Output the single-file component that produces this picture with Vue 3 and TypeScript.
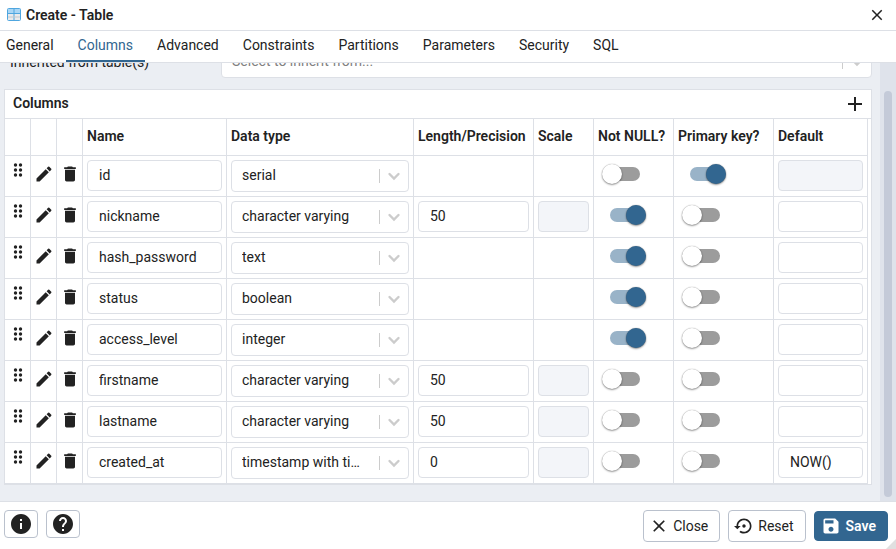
<script setup lang="ts">
import { computed, onMounted, ref } from 'vue'

interface Column {
  name: string
  type: string
  length: string | null
  scale: boolean
  notNull: boolean
  primary: boolean
  default: string
  lockDefault?: boolean
}

const tabs = ['General', 'Columns', 'Advanced', 'Constraints', 'Partitions', 'Parameters', 'Security', 'SQL']
const active = ref('Columns')

const types = ['serial', 'character varying', 'text', 'boolean', 'integer', 'timestamp with time zone']

const columns = ref<Column[]>([
  { name: 'id', type: 'serial', length: null, scale: false, notNull: false, primary: true, default: '', lockDefault: true },
  { name: 'nickname', type: 'character varying', length: '50', scale: true, notNull: true, primary: false, default: '' },
  { name: 'hash_password', type: 'text', length: null, scale: false, notNull: true, primary: false, default: '' },
  { name: 'status', type: 'boolean', length: null, scale: false, notNull: true, primary: false, default: '' },
  { name: 'access_level', type: 'integer', length: null, scale: false, notNull: true, primary: false, default: '' },
  { name: 'firstname', type: 'character varying', length: '50', scale: true, notNull: false, primary: false, default: '' },
  { name: 'lastname', type: 'character varying', length: '50', scale: true, notNull: false, primary: false, default: '' },
  { name: 'created_at', type: 'timestamp with time zone', length: '0', scale: true, notNull: false, primary: false, default: 'NOW()' },
])

function addColumn() {
  columns.value.push({ name: '', type: 'text', length: null, scale: false, notNull: false, primary: false, default: '' })
}

function removeColumn(index: number) {
  columns.value.splice(index, 1)
}

const scroller = ref<HTMLElement | null>(null)
const view = ref({ top: 0, height: 1, total: 1 })

function measure() {
  const el = scroller.value
  if (el) view.value = { top: el.scrollTop, height: el.clientHeight, total: el.scrollHeight }
}

const thumb = computed(() => ({
  marginTop: `${(view.value.top / view.value.total) * view.value.height}px`,
  height: `${(view.value.height / view.value.total) * 100}%`,
}))

onMounted(() => {
  if (scroller.value) scroller.value.scrollTop = scroller.value.scrollHeight
  measure()
})
</script>

<template>
  <div class="dialog">
    <header class="titlebar">
      <svg class="table-icon" viewBox="0 0 14 13" aria-hidden="true">
        <rect x="0.5" y="0.5" width="13" height="12" rx="1" fill="#e9eaec" stroke="#4fa6df" />
        <rect x="1" y="1" width="12" height="4" fill="#a9d6f5" />
        <path d="M1 5.5H13M7 1V12" stroke="#4fa6df" />
        <path d="M1 9H13" stroke="#c3c8cc" />
      </svg>
      <h1>Create - Table</h1>
      <button class="bare" type="button" aria-label="Close dialog">
        <svg class="i18" viewBox="0 0 24 24"><path d="M19 6.41 17.59 5 12 10.59 6.41 5 5 6.41 10.59 12 5 17.59 6.41 19 12 13.41 17.59 19 19 17.59 13.41 12z" /></svg>
      </button>
    </header>

    <nav class="tabs" role="tablist">
      <button
        v-for="tab in tabs"
        :key="tab"
        type="button"
        role="tab"
        class="tab"
        :class="{ active: tab === active }"
        :aria-selected="tab === active"
        @click="active = tab"
      >{{ tab }}</button>
    </nav>

    <main class="body">
      <div ref="scroller" class="scroller" @scroll="measure">
        <div class="inherit">
          <label for="inherit">Inherited from table(s)</label>
          <div class="picker">
            <select id="inherit" class="placeholder">
              <option>Select to inherit from...</option>
            </select>
            <svg class="arrow" viewBox="0 0 32 20" aria-hidden="true"><path d="M2.5 3V17" stroke-width="1" /><path d="M12.5 8l4.5 4.5L21.5 8" stroke-width="2.4" stroke-linecap="round" /></svg>
          </div>
        </div>

        <section class="panel">
          <div class="panel-head">
            <h2>Columns</h2>
            <button class="bare" type="button" aria-label="Add column" @click="addColumn">
              <svg class="i24" viewBox="0 0 24 24"><path d="M19 13h-6v6h-2v-6H5v-2h6V5h2v6h6v2z" /></svg>
            </button>
          </div>
          <table>
            <colgroup>
              <col class="c-tool" /><col class="c-tool" /><col class="c-tool" />
              <col class="c-name" /><col class="c-type" /><col class="c-length" /><col class="c-scale" />
              <col class="c-null" /><col class="c-key" /><col class="c-default" />
            </colgroup>
            <thead>
              <tr>
                <th></th><th></th><th></th>
                <th>Name</th><th>Data type</th><th>Length/Precision</th><th>Scale</th>
                <th>Not NULL?</th><th>Primary key?</th><th>Default</th>
              </tr>
            </thead>
            <tbody>
              <tr v-for="(c, i) in columns" :key="i">
                <td class="tool drag">
                  <button class="bare" type="button" aria-label="Reorder">
                    <svg class="i18" viewBox="0 0 18 18"><circle cx="6.5" cy="4" r="1.7" /><circle cx="11.5" cy="4" r="1.7" /><circle cx="6.5" cy="9" r="1.7" /><circle cx="11.5" cy="9" r="1.7" /><circle cx="6.5" cy="14" r="1.7" /><circle cx="11.5" cy="14" r="1.7" /></svg>
                  </button>
                </td>
                <td class="tool">
                  <button class="bare" type="button" aria-label="Edit row">
                    <svg class="i20" viewBox="0 0 24 24"><path d="M3 17.25V21h3.75L17.81 9.94l-3.75-3.75L3 17.25zM20.71 7.04c.39-.39.39-1.02 0-1.41l-2.34-2.34a.996.996 0 0 0-1.41 0l-1.83 1.83 3.75 3.75 1.83-1.83z" /></svg>
                  </button>
                </td>
                <td class="tool">
                  <button class="bare" type="button" aria-label="Delete row" @click="removeColumn(i)">
                    <svg class="i20" viewBox="0 0 24 24"><path d="M6 19c0 1.1.9 2 2 2h8c1.1 0 2-.9 2-2V7H6v12zM19 4h-3.5l-1-1h-5l-1 1H5v2h14V4z" /></svg>
                  </button>
                </td>
                <td><input v-model="c.name" class="field" type="text" aria-label="Name" /></td>
                <td>
                  <div class="picker">
                    <select v-model="c.type" aria-label="Data type">
                      <option v-for="t in types" :key="t">{{ t }}</option>
                    </select>
                    <svg class="arrow" viewBox="0 0 32 20" aria-hidden="true"><path d="M2.5 3V17" stroke-width="1" /><path d="M12.5 8l4.5 4.5L21.5 8" stroke-width="2.4" stroke-linecap="round" /></svg>
                  </div>
                </td>
                <td><input v-if="c.length !== null" v-model="c.length" class="field" type="text" aria-label="Length/Precision" /></td>
                <td><input v-if="c.scale" class="field" type="text" aria-label="Scale" disabled /></td>
                <td><input v-model="c.notNull" class="switch" type="checkbox" role="switch" aria-label="Not NULL?" /></td>
                <td><input v-model="c.primary" class="switch" type="checkbox" role="switch" aria-label="Primary key?" /></td>
                <td><input v-model="c.default" class="field" type="text" aria-label="Default" :disabled="c.lockDefault" /></td>
              </tr>
            </tbody>
          </table>
        </section>
      </div>
      <div class="track" aria-hidden="true"><div class="thumb" :style="thumb"></div></div>
    </main>

    <footer class="footer">
      <button class="btn square" type="button" aria-label="Information">
        <svg class="i24" viewBox="0 0 24 24"><path d="M12 2C6.48 2 2 6.48 2 12s4.48 10 10 10 10-4.48 10-10S17.52 2 12 2zm1 15h-2v-6h2v6zm0-8h-2V7h2v2z" /></svg>
      </button>
      <button class="btn square" type="button" aria-label="Help">
        <svg class="i24" viewBox="0 0 24 24"><path d="M12 2C6.48 2 2 6.48 2 12s4.48 10 10 10 10-4.48 10-10S17.52 2 12 2zm1 17h-2v-2h2v2zm2.07-7.75-.9.92C13.45 12.9 13 13.5 13 15h-2v-.5c0-1.1.45-2.1 1.17-2.83l1.24-1.26c.37-.36.59-.86.59-1.41 0-1.1-.9-2-2-2s-2 .9-2 2H8c0-2.21 1.79-4 4-4s4 1.79 4 4c0 .88-.36 1.68-.93 2.25z" /></svg>
      </button>
      <span class="spacer"></span>
      <button class="btn" type="button">
        <svg class="i20" viewBox="0 0 24 24"><path d="M19 6.41 17.59 5 12 10.59 6.41 5 5 6.41 10.59 12 5 17.59 6.41 19 12 13.41 17.59 19 19 17.59 13.41 12z" /></svg>
        Close
      </button>
      <button class="btn" type="button">
        <svg class="i20" viewBox="0 0 24 24"><path d="M14 12c0-1.1-.9-2-2-2s-2 .9-2 2 .9 2 2 2 2-.9 2-2zm-2-9c-4.97 0-9 4.03-9 9H0l4 4 4-4H5c0-3.87 3.13-7 7-7s7 3.13 7 7-3.13 7-7 7c-1.51 0-2.91-.49-4.06-1.3l-1.42 1.44C8.04 20.3 9.94 21 12 21c4.97 0 9-4.03 9-9s-4.03-9-9-9z" /></svg>
        Reset
      </button>
      <button class="btn primary" type="button">
        <svg class="i20" viewBox="0 0 24 24"><path d="M17 3H5c-1.11 0-2 .9-2 2v14c0 1.1.89 2 2 2h14c1.1 0 2-.9 2-2V7l-4-4zm-5 16c-1.66 0-3-1.34-3-3s1.34-3 3-3 3 1.34 3 3-1.34 3-3 3zm3-10H5V5h10v4z" /></svg>
        Save
      </button>
      <svg class="grip" viewBox="0 0 10 10" aria-hidden="true"><path d="M10 0V10H0z" /></svg>
    </footer>
  </div>
</template>

<style>
body {
  margin: 0;
}
</style>

<style scoped>
.dialog {
  --line: #dde0e6;
  --ink: #222;
  --brand: #326690;
  display: flex;
  flex-direction: column;
  height: 100vh;
  background: #fff;
  color: var(--ink);
  font-family: Roboto, "Liberation Sans", sans-serif;
  font-size: 14px;
  line-height: 20px;
}
.dialog *,
.dialog *::before,
.dialog *::after {
  box-sizing: border-box;
}
button,
input,
select {
  margin: 0;
  font: inherit;
  color: inherit;
}
svg {
  display: block;
  flex: none;
  fill: currentColor;
}
.i18 { width: 18px; height: 18px; }
.i20 { width: 20px; height: 20px; }
.i24 { width: 24px; height: 24px; }
.bare {
  display: flex;
  padding: 0;
  border: 0;
  background: none;
}
h1,
h2 {
  flex: 1;
  margin: 0;
  font-size: 14px;
  font-weight: 600;
}
h2 {
  padding-bottom: 2px;
}
.titlebar {
  display: flex;
  align-items: center;
  gap: 5px;
  height: 31px;
  padding: 0 10px 1px 7px;
  border-bottom: 1px solid var(--line);
}
.table-icon {
  width: 14px;
  height: 13px;
}
.tabs {
  display: flex;
  height: 32px;
  border-bottom: 1px solid var(--line);
}
.tab {
  padding: 0 12px 2px;
  border: 0;
  border-bottom: 2px solid transparent;
  background: none;
}
.tab:first-child {
  padding-left: 6px;
}
.tab.active {
  color: var(--brand);
  border-color: var(--brand);
}
.body {
  display: flex;
  flex: 1;
  min-height: 0;
  background: #ebeef3;
}
.scroller {
  flex: 1;
  min-width: 0;
  padding: 8px 8px 16px 4px;
  overflow-y: auto;
  scrollbar-width: none;
}
.track {
  width: 16px;
  background: #dfe3eb;
}
.thumb {
  border: 4px solid transparent;
  border-radius: 8px;
  background: #c4cad8;
  background-clip: padding-box;
}
.inherit {
  display: grid;
  grid-template-columns: 1fr 3fr;
  align-items: center;
  margin-bottom: 11px;
}
.inherit label {
  padding-left: 6px;
}
.picker {
  display: grid;
  align-items: center;
}
.picker > * {
  grid-area: 1 / 1;
}
.picker select {
  width: 100%;
  height: 32px;
  padding: 0 38px 2px 10px;
  border: 1px solid var(--line);
  border-radius: 4px;
  background: #fff;
  appearance: none;
  text-overflow: ellipsis;
}
.picker .placeholder {
  color: #808080;
}
.arrow {
  justify-self: end;
  width: 32px;
  height: 20px;
  pointer-events: none;
  fill: none;
  stroke: #ccc;
}
.panel {
  padding-right: 3px;
  border: 1px solid var(--line);
  background: #fff;
}
.panel-head {
  display: flex;
  align-items: center;
  height: 29px;
  margin-right: -3px;
  padding: 0 4px 0 8px;
  border-bottom: 1px solid var(--line);
}
table {
  width: 100%;
  border-spacing: 0;
  table-layout: fixed;
}
.c-tool { width: 26px; }
.c-name { width: 144px; }
.c-type { width: 187px; }
.c-length { width: 120px; }
.c-scale { width: 60px; }
.c-null { width: 80px; }
.c-key { width: 100px; }
th,
td {
  padding: 4px;
  border-right: 1px solid var(--line);
  border-bottom: 1px solid var(--line);
  text-align: left;
}
th {
  height: 37px;
  padding-bottom: 6px;
  font-weight: 600;
  white-space: nowrap;
}
td {
  height: 41px;
  vertical-align: top;
}
.tool {
  padding: 8px 2px 8px 3px;
}
.drag {
  padding: 5px 3px 5px 4px;
}
.field {
  display: block;
  width: 100%;
  height: 31px;
  padding: 0 11px 2px;
  border: 1px solid var(--line);
  border-radius: 4px;
  background: #fff;
}
.field:disabled {
  background: #f3f5f9;
}
.switch {
  position: relative;
  display: block;
  width: 44px;
  height: 20px;
  margin: 4px;
  appearance: none;
}
.switch::before,
.switch::after {
  content: "";
  position: absolute;
}
.switch::before {
  top: 3px;
  left: 4px;
  width: 34px;
  height: 14px;
  border-radius: 7px;
  background: #9c9c9c;
}
.switch::after {
  top: 0;
  left: 0;
  width: 20px;
  height: 20px;
  border-radius: 50%;
  background: #fff;
  box-shadow: 0 1px 2px rgb(0 0 0 / 40%), 0 0 1px rgb(0 0 0 / 40%);
}
.switch:checked::before {
  left: 8px;
  background: #99b3c8;
}
.switch:checked::after {
  left: 24px;
  background: var(--brand);
}
.footer {
  position: relative;
  display: flex;
  align-items: flex-start;
  gap: 8px;
  height: 48px;
  padding: 8px 8px 0 4px;
  border-top: 1px solid var(--line);
}
.spacer {
  flex: 1;
}
.btn {
  display: flex;
  align-items: center;
  gap: 4px;
  height: 32px;
  padding: 0 11px 0 5px;
  border: 1px solid #bac1cd;
  border-radius: 4px;
  background: #fff;
}
.square {
  height: 28px;
  padding: 0 4px;
}
.primary {
  height: 30px;
  margin-top: 1px;
  padding: 0 11px 0 6px;
  gap: 5px;
  border-color: var(--brand);
  background: var(--brand);
  color: #fff;
  font-weight: 600;
}
.grip {
  position: absolute;
  right: 0;
  bottom: 0;
  width: 10px;
  height: 10px;
  fill: #e0e0e0;
}
</style>
